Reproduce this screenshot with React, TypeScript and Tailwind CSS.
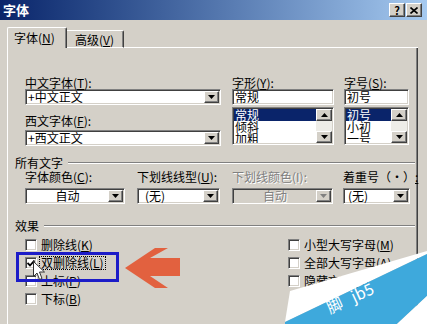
import React from 'react';

const sunken =
  'border border-t-[#808080] border-l-[#808080] border-b-white border-r-white shadow-[inset_1px_1px_0_#404040,inset_-1px_-1px_0_#d4d0c8]';
const raised =
  'bg-[#d4d0c8] border border-t-white border-l-white border-b-[#404040] border-r-[#404040] shadow-[inset_-1px_-1px_0_#808080]';

const Arrow = ({ up = false, color = '#000' }: { up?: boolean; color?: string }) => (
  <svg width="7" height="4" viewBox="0 0 7 4" className={up ? 'rotate-180' : ''}>
    <polygon points="0,0 7,0 3.5,4" fill={color} />
  </svg>
);

interface ComboProps {
  text: React.ReactNode;
  className?: string;
  textClass?: string;
  disabled?: boolean;
}

const Combo: React.FC<ComboProps> = ({ text, className = '', textClass = 'pl-[1px]', disabled = false }) => (
  <div className={`${sunken} ${disabled ? 'bg-[#d4d0c8]' : 'bg-white'} h-[16px] p-[1px] flex ${className}`}>
    <div
      className={`flex-1 flex items-center text-[12px] leading-[12px] ${textClass} ${
        disabled ? 'text-[#808080] [text-shadow:1px_1px_0_#fff]' : 'text-black'
      }`}
    >
      {text}
    </div>
    <div className={`${raised} w-[15px] flex items-center justify-center`}>
      <Arrow color={disabled ? '#808080' : '#000'} />
    </div>
  </div>
);

const TextBox = ({ text }: { text: string }) => (
  <div className={`${sunken} bg-white h-[16px] px-[2px] flex items-center text-[12px] leading-[12px]`}>{text}</div>
);

const ListBox = ({ items }: { items: string[] }) => (
  <div className={`${sunken} bg-white h-[38px] p-[1px] flex`}>
    <div className="flex-1 overflow-hidden">
      {items.map((it, i) => (
        <div
          key={it}
          className={`h-[12px] leading-[12px] text-[12px] pl-[1px] ${i === 0 ? 'bg-[#0a246a] text-white' : 'text-black'}`}
        >
          {it}
        </div>
      ))}
    </div>
    <div className="w-[16px] flex flex-col">
      <div className={`${raised} h-[12px] flex items-center justify-center`}>
        <Arrow up />
      </div>
      <div className="flex-1 bg-[#eeede8]" />
      <div className={`${raised} h-[12px] flex items-center justify-center`}>
        <Arrow />
      </div>
    </div>
  </div>
);

const Label = ({ children, disabled = false }: { children: React.ReactNode; disabled?: boolean }) => (
  <div
    className={`h-[13px] leading-[13px] text-[12px] whitespace-nowrap ${
      disabled ? 'text-[#808080] [text-shadow:1px_1px_0_#fff]' : 'text-black'
    }`}
  >
    {children}
  </div>
);

const GroupTitle = ({ title }: { title: string }) => (
  <div className="h-[13px] flex items-center">
    <span className="text-[12px] leading-[13px]">{title}</span>
    <div className="flex-1 ml-[5px] border-t border-b border-t-[#808080] border-b-white" />
  </div>
);

const CheckRow = ({
  label,
  checked = false,
  focus = false,
}: {
  label: React.ReactNode;
  checked?: boolean;
  focus?: boolean;
}) => (
  <div className="h-[18px] flex items-center">
    <div className={`${sunken} bg-white w-[12px] h-[12px] flex items-center justify-center`}>
      {checked && (
        <svg width="8" height="7" viewBox="0 0 8 7">
          <path d="M0.5 3 L3 5.5 L7.5 0.5" stroke="#000" strokeWidth="1.8" fill="none" />
        </svg>
      )}
    </div>
    <span
      className={`ml-[2px] px-[1px] text-[12px] leading-[12px] whitespace-nowrap border ${
        focus ? 'border-dotted border-black' : 'border-transparent'
      }`}
    >
      {label}
    </span>
  </div>
);

const App: React.FC = () => {
  return (
    <div className="relative w-[427px] h-[324px] overflow-hidden bg-[#d4d0c8] text-black font-['Noto_Sans_CJK_SC',sans-serif]">
      {/* title bar */}
      <div className="h-[20px] flex items-center justify-between pl-[3px] pr-[5px] bg-gradient-to-r from-[#0a246a] to-[#a6caf0]">
        <span className="text-white font-bold text-[13px] leading-[14px]">字体</span>
        <div className="flex gap-[1px]">
          <div className={`${raised} w-[16px] h-[14px] flex items-center justify-center text-[11px] leading-[11px] font-bold`}>
            ?
          </div>
          <div className={`${raised} w-[16px] h-[14px] flex items-center justify-center`}>
            <svg width="8" height="7" viewBox="0 0 8 7">
              <path d="M0.5 0.5 L7.5 6.5 M7.5 0.5 L0.5 6.5" stroke="#000" strokeWidth="1.6" />
            </svg>
          </div>
        </div>
      </div>

      {/* tabs */}
      <div className="mt-[7px] ml-[7px] w-[411px] h-[21px] flex items-end">
        <div className="w-[60px] h-[21px] border-t border-l border-r border-t-white border-l-white border-r-[#404040] shadow-[inset_-1px_0_0_#808080] rounded-t-[2px] pt-[3px] pl-[6px] text-[12px] leading-[13px] whitespace-nowrap">
          字体(<u>N</u>)
        </div>
        <div className="w-[57px] h-[18px] border-t border-r border-b border-t-white border-r-[#404040] border-b-white shadow-[inset_-1px_0_0_#808080] rounded-tr-[2px] pt-[2px] pl-[8px] text-[12px] leading-[13px] whitespace-nowrap">
          高级(<u>V</u>)
        </div>
        <div className="flex-1 h-px bg-white" />
      </div>

      {/* panel */}
      <div className="ml-[7px] w-[411px] h-[276px] border-l border-r border-l-white border-r-[#404040] shadow-[inset_-1px_0_0_#808080] pl-[7px] pr-[2px]">
        <div className="pl-[10px] pt-[28px] flex">
          <div className="w-[196px]">
            <Label>
              中文字体(<u>T</u>):
            </Label>
            <Combo text="+中文正文" />
            <div className="mt-[9px]">
              <Label>
                西文字体(<u>F</u>):
              </Label>
            </div>
            <div className="mt-[3px]">
              <Combo text="+西文正文" />
            </div>
          </div>
          <div className="w-[102px] ml-[11px]">
            <Label>
              字形(<u>Y</u>):
            </Label>
            <TextBox text="常规" />
            <div className="mt-[2px]">
              <ListBox items={['常规', '倾斜', '加粗']} />
            </div>
          </div>
          <div className="w-[65px] ml-[10px]">
            <Label>
              字号(<u>S</u>):
            </Label>
            <TextBox text="初号" />
            <div className="mt-[2px]">
              <ListBox items={['初号', '小初', '一号']} />
            </div>
          </div>
        </div>

        <div className="mt-[10px]">
          <GroupTitle title="所有文字" />
        </div>

        <div className="pl-[10px] mt-[1px] flex">
          <div className="w-[100px]">
            <Label>
              字体颜色(<u>C</u>):
            </Label>
            <div className="mt-[5px]">
              <Combo text="自动" textClass="justify-center" />
            </div>
          </div>
          <div className="w-[83px] ml-[12px]">
            <Label>
              下划线线型(<u>U</u>):
            </Label>
            <div className="mt-[5px]">
              <Combo text="(无)" textClass="pl-[6px]" />
            </div>
          </div>
          <div className="w-[101px] ml-[12px]">
            <Label disabled>下划线颜色(I):</Label>
            <div className="mt-[5px]">
              <Combo text="自动" textClass="justify-center" disabled />
            </div>
          </div>
          <div className="w-[67px] ml-[10px]">
            <Label>
              着重号（·）<u>:</u>
            </Label>
            <div className="mt-[5px]">
              <Combo text="(无)" textClass="pl-[3px]" />
            </div>
          </div>
        </div>

        <div className="mt-[15px]">
          <GroupTitle title="效果" />
        </div>

        <div className="mt-[4px] flex">
          <div className="w-[273px] pl-[10px]">
            <CheckRow label={<>删除线(<u>K</u>)</>} />
            <CheckRow label={<>双删除线(<u>L</u>)</>} checked focus />
            <CheckRow label={<>上标(<u>P</u>)</>} />
            <CheckRow label={<>下标(<u>B</u>)</>} />
          </div>
          <div>
            <CheckRow label={<>小型大写字母(<u>M</u>)</>} />
            <CheckRow label={<>全部大写字母(<u>A</u>)</>} />
            <CheckRow label={<>隐藏文字(<u>H</u>)</>} />
          </div>
        </div>
      </div>

      {/* annotation: blue highlight box */}
      <div className="absolute left-[16px] top-[252px] w-[103px] h-[30px] border-[3px] border-[#1c1cc8]" />

      {/* annotation: orange arrow */}
      <svg className="absolute left-[125px] top-[248px]" width="55" height="40" viewBox="0 0 55 40">
        <polygon points="0,20 30,0 43,0 25,10 55,10 55,28 25,28 43,40 30,40" fill="#e2613f" />
      </svg>

      {/* mouse cursor */}
      <svg className="absolute left-[33px] top-[261px]" width="13" height="20" viewBox="0 0 13 20">
        <path d="M0.5 0.5 L0.5 15.5 L4 12 L6.5 18.5 L9 17.5 L6.5 11 L11.5 11 Z" fill="#fff" stroke="#333" strokeWidth="1" />
      </svg>

      {/* watermark page curl */}
      <svg className="absolute left-[285px] top-[251px]" width="142" height="73" viewBox="0 0 142 73">
        <polygon points="5,40 142,0 142,3 0,71" fill="#ffffff" />
        <polygon points="0,71 142,3 142,45 112,73 0,73" fill="#3ea9dc" />
        <polygon points="112,73 142,45 142,73" fill="#ffffff" />
        <text
          x="45"
          y="63"
          fill="#ffffff"
          fontSize="16"
          fontFamily="Noto Sans CJK SC, sans-serif"
          transform="rotate(-25 45 63)"
        >
          脚{'\u00a0\u00a0\u00a0'}jb5
        </text>
      </svg>
    </div>
  );
};

export default App;
